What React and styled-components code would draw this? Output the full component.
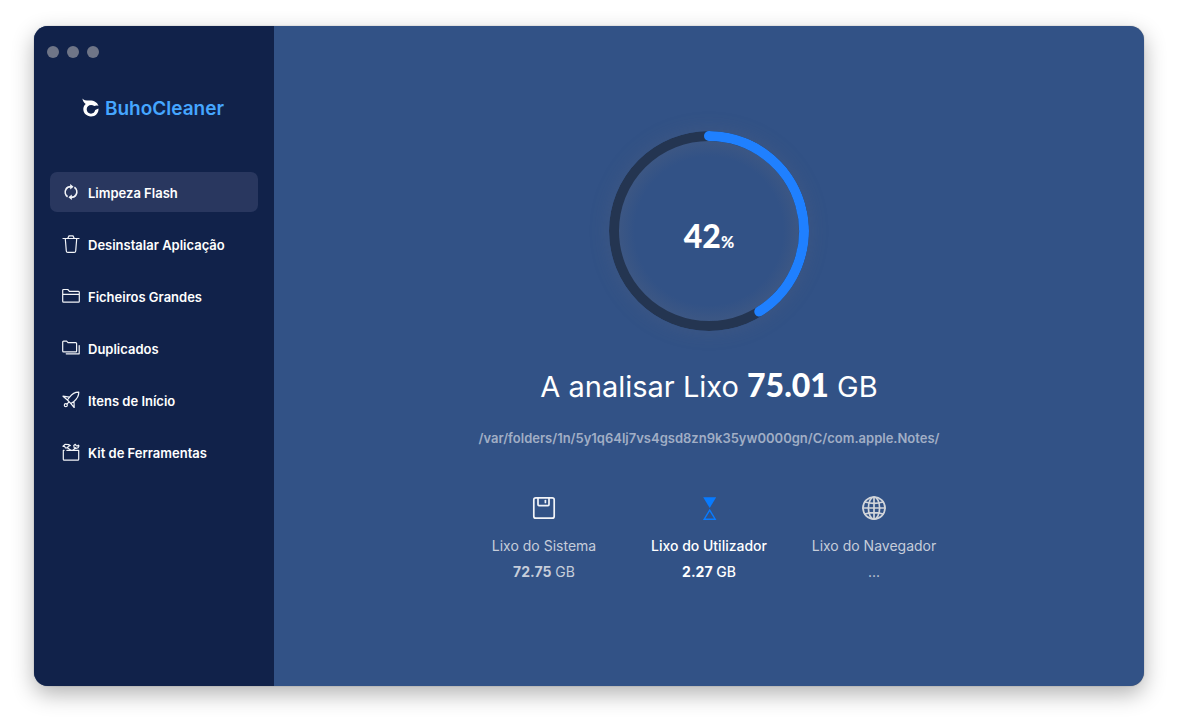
import React from "react";
import styled, { createGlobalStyle } from "styled-components";

const GlobalStyle = createGlobalStyle`
  * { box-sizing: border-box; }
  body {
    margin: 0;
    background: #ffffff;
    font-family: Inter, "Liberation Sans", sans-serif;
    color: #ffffff;
  }
`;

const Desktop = styled.div`
  display: grid;
  min-height: 100vh;
  padding: 26px 34px 42px;
`;

const Window = styled.div`
  display: grid;
  grid-template-columns: 240px 1fr;
  border-radius: 14px;
  overflow: hidden;
  background: #325286;
  box-shadow: 0 0 1px rgba(0, 0, 0, 0.5), 0 8px 22px rgba(0, 0, 0, 0.3);
`;

const Sidebar = styled.aside`
  display: flex;
  flex-direction: column;
  background: #11224a;
`;

const WindowControls = styled.div`
  display: flex;
  gap: 8px;
  padding: 20px 13px 0;
`;

const ControlDot = styled.button`
  width: 12px;
  height: 12px;
  padding: 0;
  border: 0;
  border-radius: 50%;
  background: #6f7587;
`;

const Brand = styled.div`
  display: flex;
  align-items: center;
  justify-content: center;
  gap: 5px;
  height: 28px;
  margin-top: 36px;
  padding-right: 2px;
  font-size: 19px;
  font-weight: 600;
  color: #45a6ff;
`;

const Nav = styled.nav`
  display: flex;
  flex-direction: column;
  gap: 12px;
  padding: 0 16px;
  margin-top: 50px;
`;

const NavItem = styled.button`
  display: flex;
  align-items: center;
  gap: 8px;
  height: 40px;
  padding: 1px 12px 0;
  border: 0;
  border-radius: 7px;
  background: ${(p) => (p.$active ? "#29375f" : "transparent")};
  color: #ffffff;
  font: 600 13px Inter, sans-serif;
  text-align: left;
  white-space: nowrap;

  svg { flex: none; margin-bottom: 2px; }
`;

const Main = styled.main`
  display: flex;
  flex-direction: column;
  align-items: center;
  padding-top: 105px;
`;

const Progress = styled.div`
  display: grid;
  place-items: center;
  width: 200px;
  height: 200px;
  border-radius: 50%;
  box-shadow: 0 0 20px rgba(110, 110, 120, 0.24);

  > * { grid-area: 1 / 1; }
`;

const Ring = styled.svg`
  border-radius: 50%;
`;

const Percent = styled.div`
  padding-top: 16px;
  font-family: Lato, sans-serif;
  font-weight: 900;
  font-size: 32px;
  line-height: 40px;

  small { font-size: 16px; }
`;

const Title = styled.h1`
  margin: 34px 0 0;
  font-size: 29px;
  line-height: 40px;
  font-weight: 400;

  strong { font: 900 32px/40px Lato, sans-serif; }
`;

const Path = styled.p`
  margin: 21px 0 0;
  font-size: 13px;
  line-height: 20px;
  font-weight: 600;
  color: #a1aec5;
`;

const Categories = styled.div`
  display: grid;
  grid-template-columns: repeat(3, 165px);
  margin-top: 48px;
`;

const Category = styled.div`
  display: flex;
  flex-direction: column;
  align-items: center;
  font-size: 14px;
  line-height: 26px;
  white-space: nowrap;
  font-weight: ${(p) => (p.$current ? 500 : 400)};
  color: ${(p) => (p.$current ? "#ffffff" : "#c6cdda")};

  svg { margin-bottom: 13px; }
  strong { font-weight: 700; }
`;

const Icon = ({ children, size = 18 }) => (
  <svg width={size} height={size} viewBox={`0 0 ${size} ${size}`} fill="none" stroke="#f2f4f8"
    strokeWidth="1.2" strokeLinecap="round" strokeLinejoin="round" aria-hidden="true">
    {children}
  </svg>
);

const icons = {
  flash: (
    <Icon>
      <path
        d="M5.6 13.8A5.8 5.8 0 0 1 3.9 6.4Q5.2 3.7 9 3.7M12.4 4.2A5.8 5.8 0 0 1 14.1 11.6Q12.8 14.3 9 14.3"
        strokeWidth="1.7" strokeLinecap="butt"
      />
      <path d="M8.2 .9l3.4 2.8-3.4 2.8zM9.8 11.5l-3.4 2.8 3.4 2.8z" fill="#f2f4f8" stroke="none" />
    </Icon>
  ),
  trash: (
    <Icon>
      <path d="M1 3.5h16M5.8 3.2L7 .9h4l1.2 2.3M3.3 3.8l1 12.2q.1 1.4 1.5 1.4h6.4q1.4 0 1.5-1.4l1-12.2" />
    </Icon>
  ),
  folder: (
    <Icon>
      <path d="M.7 14.2V3.4q0-.9.9-.9h4.2l1.6 1.8h9q.9 0 .9.9v9q0 1-.9 1H1.6q-.9 0-.9-1zM.7 7.3h16.6" />
    </Icon>
  ),
  copies: (
    <Icon>
      <path d="M.7 12V3.2q0-1 .9-1h3l1.4 1.5h7.7q.9 0 .9.9V12q0 .9-.9.9H1.6q-.9 0-.9-.9zM17.2 6.5v8.3H4.2" />
    </Icon>
  ),
  rocket: (
    <Icon>
      <path d="M16.8 1.1C12.7 1 9.7 3.2 7.6 6.1L5.4 9l3.5 3.6 3-2.2c3-2.3 5-5.1 4.9-9.3zM7.4 6.1L1 5.2l4.4 3.8M12 10.4l.2 6.1-3.3-3.9" />
      <circle cx="3.8" cy="14.2" r="1.5" />
      <path d="M5 13l1.6-1.6" />
    </Icon>
  ),
  toolkit: (
    <Icon>
      <path d="M2 7.4h-.7v8.8q0 .9.9.9h13.6q.9 0 .9-.9V7.4H4.9" />
      <path d="M1 3.3l2-1.9 3.6.1 1.7 1-2.1.9-.6 1.4L3.5 5l-.8-1.6zM5 4.5l3.8 2.7M11 7.2l2.6-2.5M13.3 1.3l-1.5 1.2.3 2 1.8 1 2.2-.7.9-2-.7-.7-1.2 1-1.1-.7z" />
    </Icon>
  ),
  disk: (
    <Icon size={24}>
      <rect x="1.8" y="1.8" width="20.4" height="20.4" rx="2" strokeWidth="1.7" />
      <path d="M6 1.8v6.8q0 1 1 1h9q1 0 1-1V1.8" strokeWidth="1.7" />
      <path d="M13.4 4.6v1.8" strokeWidth="1.7" />
    </Icon>
  ),
  hourglass: (
    <Icon size={24}>
      <path d="M6.2 1.2h13L12.7 12z" fill="#087bff" stroke="none" />
      <path d="M12.7 14.2l5.5 9H7.2z" stroke="#087bff" strokeWidth="1.4" strokeLinejoin="miter" />
    </Icon>
  ),
  globe: (
    <Icon size={24}>
      <g stroke="#d2d5da" strokeWidth="1.7">
        <circle cx="12" cy="12" r="11" />
        <ellipse cx="12" cy="12" rx="5.6" ry="11" />
        <path d="M12 1v22M1 12h22M3 6q9 2.6 18 0M3 18q9-2.6 18 0" />
      </g>
    </Icon>
  ),
};

const menu = [
  ["flash", "Limpeza Flash"],
  ["trash", "Desinstalar Aplicação"],
  ["folder", "Ficheiros Grandes"],
  ["copies", "Duplicados"],
  ["rocket", "Itens de Início"],
  ["toolkit", "Kit de Ferramentas"],
];

export default function App() {
  return (
    <Desktop>
      <GlobalStyle />
      <Window>
        <Sidebar>
          <WindowControls>
            <ControlDot aria-label="Fechar" />
            <ControlDot aria-label="Minimizar" />
            <ControlDot aria-label="Ampliar" />
          </WindowControls>
          <Brand>
            <svg width="18" height="20" viewBox="0 0 18 20" aria-hidden="true">
              <path
                d="M.4.4C1.6 2 3.6 2.6 7.6 2.6c4.8 0 7.8 2 8.9 5.4-1.6-.7-2.9-.6-4.2 0-3.5-2.4-7.6-.4-7.6 3.3 0 2.6 1.9 4.4 4.3 4.4 2.2 0 3.7-1.3 4.2-3.6l3.3-1.7c.3 4.6-2.9 8-7.5 8-4.4 0-7.7-3.1-7.7-7.3 0-2.2.9-4 2.4-5.2C2 4.5.8 2.8.4.4z"
                fill="#ffffff"
              />
            </svg>
            <span>BuhoCleaner</span>
          </Brand>
          <Nav>
            {menu.map(([icon, label], i) => (
              <NavItem key={icon} $active={i === 0}>
                {icons[icon]}
                {label}
              </NavItem>
            ))}
          </Nav>
        </Sidebar>
        <Main>
          <Progress>
            <Ring width="200" height="200" viewBox="0 0 200 200" aria-hidden="true">
              <defs>
                <radialGradient id="glow">
                  <stop offset="78%" stopColor="#6e6e78" stopOpacity="0" />
                  <stop offset="100%" stopColor="#6e6e78" stopOpacity="0.22" />
                </radialGradient>
              </defs>
              <circle cx="100" cy="100" r="95" fill="url(#glow)" stroke="#243551" strokeWidth="10" />
              <path d="M100 5A95 95 0 0 1 150.3 180.6" fill="none" stroke="#1f80ff" strokeWidth="10" strokeLinecap="round" />
            </Ring>
            <Percent>42<small>%</small></Percent>
          </Progress>
          <Title>A analisar Lixo <strong>75.01</strong> GB</Title>
          <Path>/var/folders/1n/5y1q64lj7vs4gsd8zn9k35yw0000gn/C/com.apple.Notes/</Path>
          <Categories>
            <Category>
              {icons.disk}
              <span>Lixo do Sistema</span>
              <span><strong>72.75</strong> GB</span>
            </Category>
            <Category $current>
              {icons.hourglass}
              <span>Lixo do Utilizador</span>
              <span><strong>2.27</strong> GB</span>
            </Category>
            <Category>
              {icons.globe}
              <span>Lixo do Navegador</span>
              <span>...</span>
            </Category>
          </Categories>
        </Main>
      </Window>
    </Desktop>
  );
}
